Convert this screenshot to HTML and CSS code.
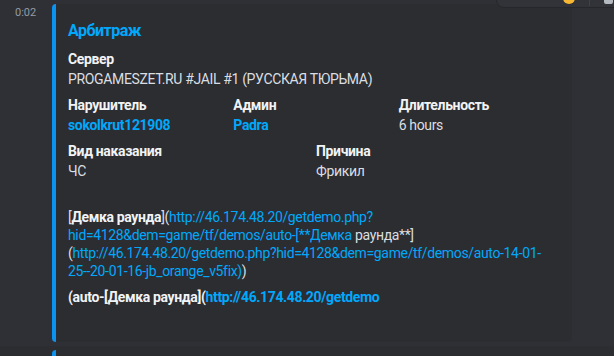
FILE: index.html
```html
<!DOCTYPE html>
<html lang="ru">
<head>
    <meta charset="UTF-8">
    <meta name="viewport" content="width=device-width, initial-scale=1.0">
    <title>Арбитраж</title>
    <link rel="stylesheet" href="styles.css">
</head>
<body>

    <div class="chat">
        <!-- панель действий над сообщением -->
        <div class="toolbar">
            <span class="tool-emoji"></span>
            <span class="tool-sep"></span>
            <span class="tool-icon"></span>
        </div>

        <div class="message hovered">
            <span class="time">0:02</span>
            <div class="embed">
                <div class="embed-title">Арбитраж</div>
                <div class="fields">
                    <div class="field full">
                        <div class="name">Сервер</div>
                        <div class="value">PROGAMESZET.RU #JAIL #1 (РУССКАЯ ТЮРЬМА)</div>
                    </div>
                    <div class="field col1">
                        <div class="name">Нарушитель</div>
                        <div class="value"><a class="link bold" href="#">sokolkrut121908</a></div>
                    </div>
                    <div class="field col2">
                        <div class="name">Админ</div>
                        <div class="value"><a class="link bold" href="#">Padra</a></div>
                    </div>
                    <div class="field col3">
                        <div class="name">Длительность</div>
                        <div class="value">6 hours</div>
                    </div>
                    <div class="field half1">
                        <div class="name">Вид наказания</div>
                        <div class="value">ЧС</div>
                    </div>
                    <div class="field half2">
                        <div class="name">Причина</div>
                        <div class="value">Фрикил</div>
                    </div>
                    <div class="field full">
                        <div class="name">&#8203;</div>
                        <div class="value nowrap">[<b>Демка раунда</b>](<a class="link" href="#">http://46.174.48.20/getdemo.php?<br>hid=4128&amp;dem=game/tf/demos/auto-[**Демка</a> раунда**]<br>(<a class="link" href="#">http://46.174.48.20/getdemo.php?hid=4128&amp;dem=game/tf/demos/auto-14-01-<br>25--20-01-16-jb_orange_v5fix)</a>)</div>
                    </div>
                    <div class="field full">
                        <div class="name">(auto-[Демка раунда](<a class="link" href="#">http://46.174.48.20/getdemo</a></div>
                        <div class="value">&#8203;</div>
                    </div>
                </div>
            </div>
        </div>

        <div class="message">
            <span class="time"></span>
            <div class="embed"></div>
        </div>
    </div>

</body>
</html>
```

FILE: styles.css
```css
body {
    margin: 0;
    background-color: #2b2d31;
    font-family: 'Roboto', 'Noto Sans', sans-serif;
    color: #dbdee1;
    overflow: hidden;
}
.chat {
    position: relative;
    height: 356px;
    overflow: hidden;
}

/* панель действий */
.toolbar {
    position: absolute;
    top: -26px;
    left: 496px;
    width: 140px;
    height: 32px;
    background-color: #313338;
    border: 1px solid #26272b;
    border-radius: 8px;
    display: flex;
    align-items: flex-end;
    z-index: 5;
}
.tool-emoji {
    width: 12px;
    height: 12px;
    border-radius: 50%;
    background-color: #f7b733;
    margin: 0 0 3px 66px;
}
.tool-sep {
    width: 1px;
    height: 22px;
    background-color: #3f4147;
    margin: 0 0 1px 14px;
}
.tool-icon {
    width: 9px;
    height: 10px;
    border-radius: 2px;
    background-color: #b5bac1;
    margin: 0 0 3px 14px;
}

/* сообщения */
.message {
    display: flex;
    padding: 4px 0;
}
.message.hovered {
    background-color: #2e3035;
}
.time {
    width: 37px;
    flex-shrink: 0;
    padding-left: 15px;
    font-size: 11px;
    line-height: 18px;
    color: #949ba4;
}

/* эмбед */
.embed {
    box-sizing: border-box;
    width: 520px;
    min-height: 40px;
    padding: 8px 16px 16px 12px;
    background-color: #2b2d31;
    border-left: 4px solid #0a94f0;
    border-radius: 4px;
    letter-spacing: -0.35px;
}
.embed-title {
    margin-top: 8px;
    font-size: 16px;
    line-height: 22px;
    font-weight: 700;
    color: #00a8fc;
    letter-spacing: -0.5px;
}
.fields {
    display: grid;
    grid-template-columns: repeat(12, 1fr);
    gap: 8px;
    margin-top: 8px;
}
.field {
    font-size: 14px;
    line-height: 18px;
    min-width: 0;
}
.full  { grid-column: 1 / 13; }
.col1  { grid-column: 1 / 5; }
.col2  { grid-column: 5 / 9; }
.col3  { grid-column: 9 / 13; }
.half1 { grid-column: 1 / 7; }
.half2 { grid-column: 7 / 13; }

.name {
    font-weight: 700;
    color: #f2f3f5;
    margin-bottom: 2px;
}
.value {
    color: #dbdee1;
}
.nowrap {
    white-space: nowrap;
}
.value b {
    color: #f2f3f5;
}
.link {
    color: #00a8fc;
    text-decoration: none;
}
.bold {
    font-weight: 700;
}
```
